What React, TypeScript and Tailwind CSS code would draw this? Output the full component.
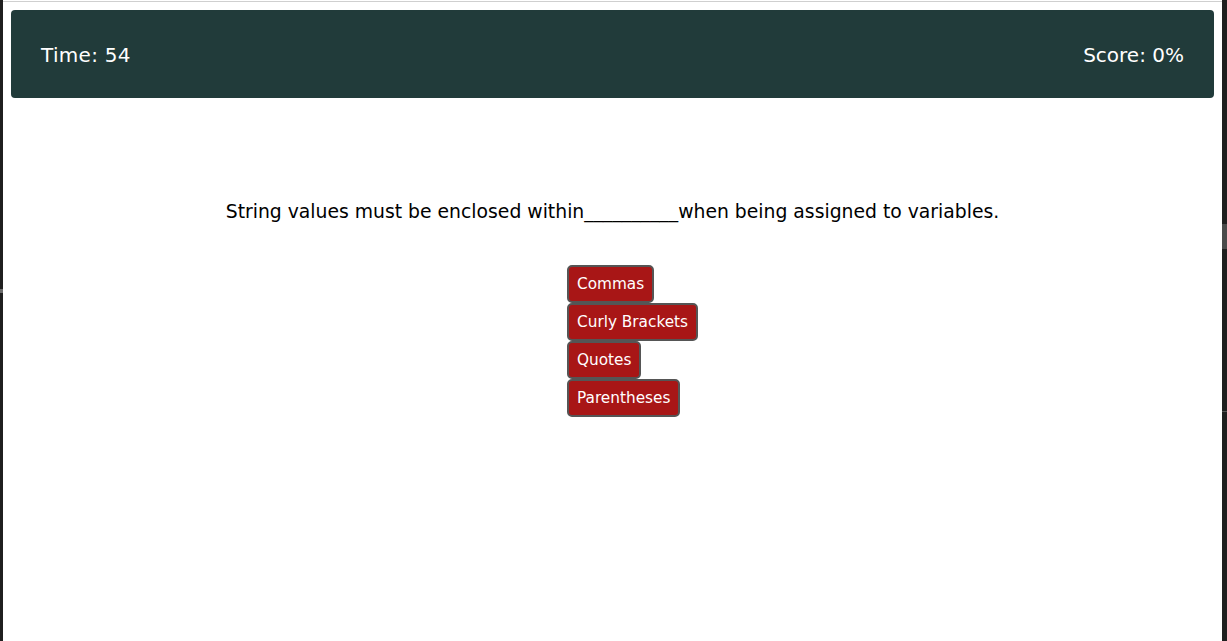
const answers = ["Commas", "Curly Brackets", "Quotes", "Parentheses"];

export default function App() {
  return (
    <div
      className="flex h-[641px] w-[1227px] overflow-hidden bg-white"
      style={{ fontFamily: '"DejaVu Sans", "Open Sans", sans-serif' }}
    >
      {/* left window edge */}
      <div className="w-[3px] shrink-0 bg-[#1f1f1f] flex flex-col">
        <div className="h-[289px]" />
        <div className="h-[4px] bg-[#6b6b6b]" />
      </div>

      {/* page */}
      <div className="flex-1 flex flex-col pt-px">
        <div className="h-px bg-[#cfcfcf]" />
        <header className="mx-2 mt-2 h-[88px] rounded-[4px] bg-[#213b3a] px-[30px] pt-[2px] flex items-center justify-between text-white text-[20px]">
          <span className="tracking-[0.3px]">Time: 54</span>
          <span>Score: 0%</span>
        </header>

        <main className="flex flex-col">
          <p className="mt-[101px] text-center text-[18.8px] leading-[26px] text-black">
            String values must be enclosed within__________when being assigned to variables.
          </p>
          <div className="mt-[40px] pl-[564px] flex flex-col items-start">
            {answers.map((a) => (
              <button
                key={a}
                className="h-[38px] rounded-[5px] border-2 border-[#555555] bg-[#a81616] px-2 text-[15.3px] text-white"
              >
                {a}
              </button>
            ))}
          </div>
        </main>
      </div>

      {/* right scrollbar strip */}
      <div className="w-[5px] shrink-0 bg-[#1f1f1f] flex flex-col">
        <div className="h-[224px]" />
        <div className="h-[25px] bg-[#4a4a4a]" />
        <div className="h-[162px]" />
        <div className="h-px bg-[#555555]" />
      </div>
    </div>
  );
}
